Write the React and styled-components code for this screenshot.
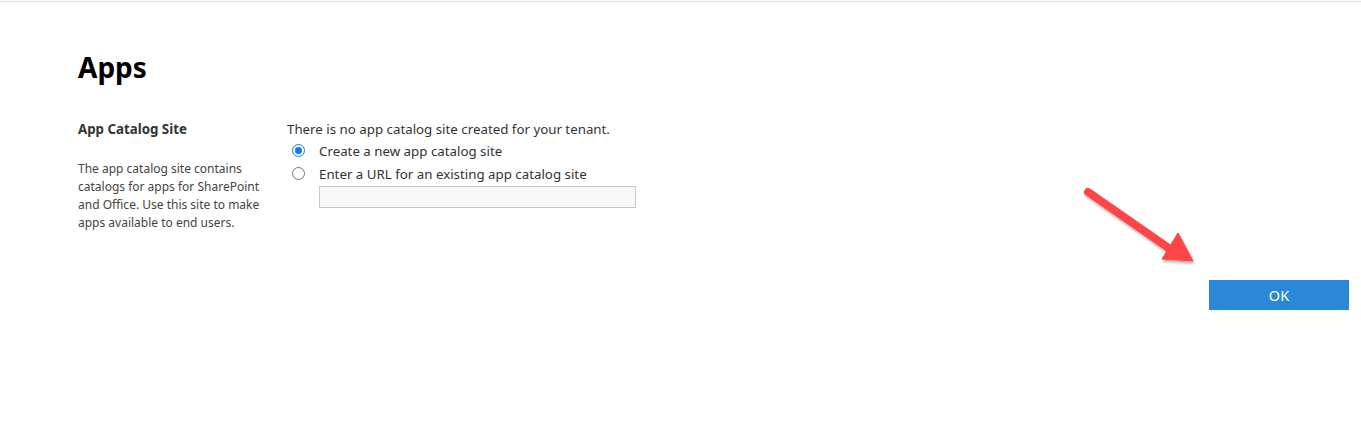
import React from "react";
import styled, { createGlobalStyle } from "styled-components";

const Global = createGlobalStyle`
  html, body { margin: 0; padding: 0; background: #fff; }
  body { font-family: "Noto Sans", "Open Sans", sans-serif; color: #333; }
`;

const Page = styled.div`
  position: relative;
  width: 1361px;
  height: 434px;
  margin-top: 1px;
  border-top: 1px solid #dedede;
  box-sizing: border-box;
`;

const Content = styled.div`
  padding: 46px 0 0 78px;
  display: flex;
  flex-direction: column;
`;

const Title = styled.h1`
  margin: 0;
  font-size: 28px;
  line-height: 38px;
  font-weight: 700;
  color: #000;
`;

const Section = styled.div`
  display: grid;
  grid-template-columns: 209px 1fr;
  margin-top: 33px;
`;

const LeftCol = styled.div`
  display: flex;
  flex-direction: column;
  width: 188px;
`;

const SubTitle = styled.h2`
  margin: 0;
  font-size: 13.3px;
  line-height: 20px;
  font-weight: 700;
  color: #333;
`;

const Description = styled.p`
  margin: 21px 0 0;
  font-size: 12px;
  line-height: 18px;
  color: #444;
`;

const RightCol = styled.div`
  display: flex;
  flex-direction: column;
`;

const Info = styled.div`
  font-size: 13.3px;
  line-height: 20px;
  color: #333;
`;

const Option = styled.label`
  display: flex;
  align-items: center;
  height: 23px;
  font-size: 13.3px;
  color: #333;
  padding-left: 5px;
`;

const Radio = styled.span`
  width: 11px;
  height: 11px;
  border-radius: 50%;
  border: 1px solid ${(p) => (p.$checked ? "#0a78ff" : "#767676")};
  box-sizing: content-box;
  display: flex;
  align-items: center;
  justify-content: center;
  margin-right: 14px;
  &::after {
    content: "";
    display: ${(p) => (p.$checked ? "block" : "none")};
    width: 7px;
    height: 7px;
    border-radius: 50%;
    background: #0a78ff;
  }
`;

const UrlInput = styled.div`
  margin: 1px 0 0 32px;
  width: 315px;
  height: 20px;
  border: 1px solid #c8c8c8;
  background: #f8f8f8;
`;

const Actions = styled.div`
  display: flex;
  justify-content: flex-end;
  padding-right: 12px;
  margin-top: 48px;
`;

const OkButton = styled.button`
  width: 140px;
  height: 30px;
  border: none;
  background: #2b88d8;
  color: #fff;
  font-family: "Noto Sans", "Open Sans", sans-serif;
  font-size: 14.5px;
  padding: 0;
`;

const Arrow = styled.svg`
  position: absolute;
  left: 1070px;
  top: 170px;
  pointer-events: none;
`;

export default function App() {
  return (
    <>
      <Global />
      <Page>
        <Content>
          <Title>Apps</Title>
          <Section>
            <LeftCol>
              <SubTitle>App Catalog Site</SubTitle>
              <Description>
                The app catalog site contains catalogs for apps for SharePoint
                and Office. Use this site to make apps available to end users.
              </Description>
            </LeftCol>
            <RightCol>
              <Info>There is no app catalog site created for your tenant.</Info>
              <Option>
                <Radio $checked />
                Create a new app catalog site
              </Option>
              <Option>
                <Radio />
                Enter a URL for an existing app catalog site
              </Option>
              <UrlInput />
            </RightCol>
          </Section>
        </Content>
        <Actions>
          <OkButton>OK</OkButton>
        </Actions>
        <Arrow width="140" height="105" viewBox="0 0 140 105">
          <defs>
            <filter id="sh" x="-20%" y="-20%" width="150%" height="150%">
              <feDropShadow dx="1" dy="2" stdDeviation="1.6" floodColor="#000" floodOpacity="0.35" />
            </filter>
          </defs>
          <g filter="url(#sh)" fill="#ff4444" stroke="#ff4444">
            <line x1="18" y1="20" x2="100" y2="77" strokeWidth="8" strokeLinecap="round" />
            <polygon points="108,61 123,89 92,87" strokeWidth="1" strokeLinejoin="round" />
          </g>
        </Arrow>
      </Page>
    </>
  );
}
